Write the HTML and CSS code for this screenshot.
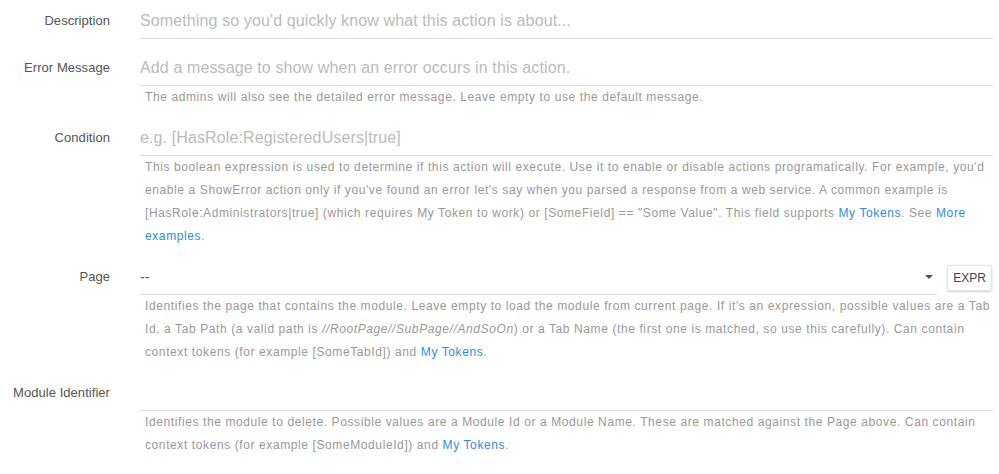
FILE: index.html
```html
<!DOCTYPE html>
<html>
<head>
<meta charset="utf-8">
<link rel="stylesheet" href="styles.css">
</head>
<body>
<div class="form">
  <div class="row">
    <label class="label">Description</label>
    <div class="field">
      <div class="input placeholder">Something so you'd quickly know what this action is about...</div>
    </div>
  </div>
  <div class="row">
    <label class="label">Error Message</label>
    <div class="field">
      <div class="input placeholder">Add a message to show when an error occurs in this action.</div>
      <div class="help">The admins will also see the detailed error message. Leave empty to use the default message.</div>
    </div>
  </div>
  <div class="row">
    <label class="label">Condition</label>
    <div class="field">
      <div class="input placeholder">e.g. [HasRole:RegisteredUsers|true]</div>
      <div class="help">This boolean expression is used to determine if this action will execute. Use it to enable or disable actions programatically. For example, you'd enable a ShowError action only if you've found an error let's say when you parsed a response from a web service. A common example is [HasRole:Administrators|true] (which requires My Token to work) or [SomeField] == "Some Value". This field supports <a class="link">My Tokens</a>. See <a class="link">More examples</a>.</div>
    </div>
  </div>
  <div class="row">
    <label class="label">Page</label>
    <div class="field">
      <div class="select-line">
        <div class="input select"><span class="value">--</span><span class="caret"></span></div>
        <button class="btn">EXPR</button>
      </div>
      <div class="help">Identifies the page that contains the module. Leave empty to load the module from current page. If it's an expression, possible values are a Tab Id, a Tab Path (a valid path is <i>//RootPage//SubPage//AndSoOn</i>) or a Tab Name (the first one is matched, so use this carefully). Can contain context tokens (for example [SomeTabId]) and <a class="link">My Tokens</a>.</div>
    </div>
  </div>
  <div class="row">
    <label class="label">Module Identifier</label>
    <div class="field">
      <div class="input"></div>
      <div class="help">Identifies the module to delete. Possible values are a Module Id or a Module Name. These are matched against the Page above. Can contain context tokens (for example [SomeModuleId]) and <a class="link">My Tokens</a>.</div>
    </div>
  </div>
</div>
</body>
</html>
```

FILE: styles.css
```css
html, body {
  margin: 0;
  padding: 0;
  background: #fff;
}
body {
  font-family: "Liberation Sans", Arial, sans-serif;
  padding: 4px 6px 0 0;
}
.form {
  display: flex;
  flex-direction: column;
  gap: 12px;
}
.row {
  display: grid;
  grid-template-columns: 110px 1fr;
  column-gap: 30px;
}
.label {
  text-align: right;
  font-size: 13px;
  color: #555;
  height: 34px;
  line-height: 34px;
  white-space: nowrap;
  letter-spacing: 0.05px;
}
.field {
  min-width: 0;
}
.input {
  height: 34px;
  line-height: 34px;
  border-bottom: 1px solid #ddd;
  font-size: 16px;
  color: #555;
  white-space: nowrap;
  overflow: hidden;
  letter-spacing: 0.12px;
}
.placeholder {
  color: #bbb;
}
.help {
  padding-left: 5px;
  font-size: 12px;
  line-height: 23px;
  color: #999;
  letter-spacing: 0.6px;
}
.link {
  color: #2b8de8;
  text-decoration: none;
}
.select-line {
  display: flex;
  align-items: center;
  gap: 10px;
}
.select {
  flex: 1;
  display: flex;
  align-items: center;
  justify-content: space-between;
  font-size: 14px;
  padding-right: 4px;
}
.caret {
  width: 0;
  height: 0;
  border-left: 4px solid transparent;
  border-right: 4px solid transparent;
  border-top: 4px solid #555;
  margin-top: -1px;
}
.btn {
  font-family: "Liberation Sans", Arial, sans-serif;
  font-size: 12px;
  color: #444;
  background: #fff;
  border: 1px solid #e4e4e4;
  border-radius: 2px;
  box-shadow: 0 1px 2px rgba(0,0,0,0.18);
  height: 26px;
  padding: 0 5px;
  margin-right: 1px;
}
```
